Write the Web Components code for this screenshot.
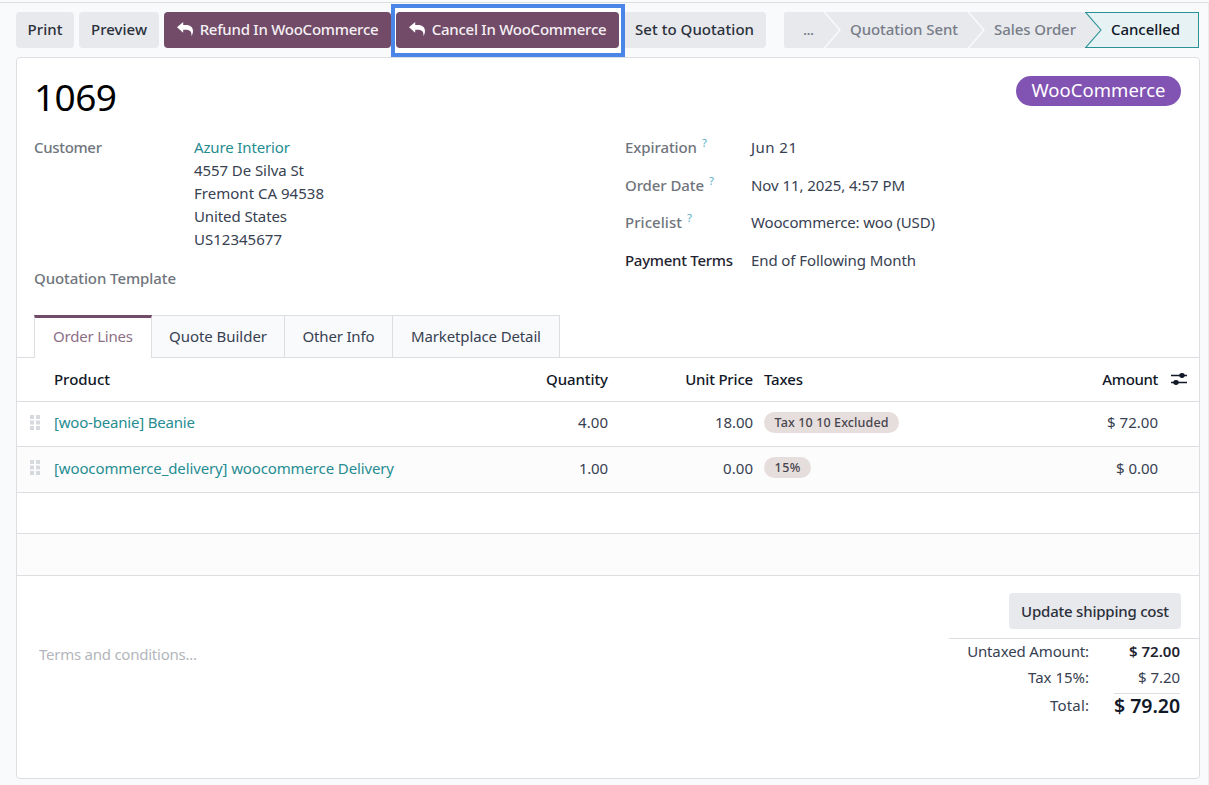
<!DOCTYPE html>
<html lang="en">
<head>
<meta charset="utf-8">
<title>1069 - Sales Order</title>
<style>
  :root {
    --brand: #714b67;
    --link: #268c91;
    --line: #dcdee2;
    --muted: #70757d;
    --text: #374151;
    --dark: #111827;
    --button: #e7e9ed;
  }

  body {
    margin: 0;
    height: 785px;
    overflow: hidden;
    background: #f9fafc;
    color: var(--text);
    font: 15px/20px "Noto Sans", "Open Sans", sans-serif;
  }
</style>
</head>
<body>
<order-form></order-form>

<script>
/**
 * FitText - a single line of text tracked to a given width in pixels
 */
class FitText extends HTMLElement {
  constructor() {
    super();
    this.attachShadow({ mode: 'open' });
    this.shadowRoot.innerHTML = `
      <style>
        :host { display: inline-block; white-space: nowrap; }
        span { display: inline-block; }
      </style>
      <span><slot></slot></span>
    `;
  }

  connectedCallback() {
    const width = Number(this.getAttribute('width'));
    const span = this.shadowRoot.querySelector('span');
    const count = this.textContent.length;
    if (!width || count < 2) return;

    const natural = span.getBoundingClientRect().width;
    span.style.letterSpacing = `${(width - natural) / (count - 1)}px`;
    this.style.width = `${width}px`;
  }
}

/**
 * ActionButton - grey by default, plum with the "primary" attribute
 */
class ActionButton extends HTMLElement {
  constructor() {
    super();
    this.attachShadow({ mode: 'open' });
    this.shadowRoot.innerHTML = `
      <style>
        :host { display: block; position: relative; flex: none; }
        button {
          position: relative;
          display: flex;
          align-items: center;
          justify-content: center;
          gap: 7px;
          box-sizing: border-box;
          width: 100%;
          height: 36px;
          padding: 0 0 var(--lift, 2px);
          border: 0;
          border-radius: 4px;
          background: var(--button);
          color: #2b303b;
          font: inherit;
          font-weight: 500;
        }
        svg { display: none; }
        :host([primary]) button { background: var(--brand); color: #f5f0f4; }
        :host([primary]) svg { display: block; }
        :host([marked])::before {
          content: '';
          position: absolute;
          inset: -8px -6px -9px -5px;
          border: 4px solid #4a86e8;
          background: #fff;
        }
      </style>
      <button>
        <svg width="16" height="14" viewBox="0 0 16 14">
          <path fill="#fff" d="M0 5.3 6.2 0v3.1h2.6c4.9 0 7.2 2.4 7.2 6.2 0 1.8-.7 3.4-1.6 4.7.4-4-1.1-6.2-5.6-6.2H6.2v3z"/>
        </svg>
        <slot></slot>
      </button>
    `;
  }
}

/**
 * StatusStep - one arrow segment of the status bar
 */
class StatusStep extends HTMLElement {
  constructor() {
    super();
    this.attachShadow({ mode: 'open' });
    this.shadowRoot.innerHTML = `
      <style>
        :host {
          display: flex;
          align-items: center;
          box-sizing: border-box;
          height: 36px;
          background: var(--button);
          color: #777c88;
          font-weight: 500;
        }
        svg { display: block; flex: none; margin-right: 9px; }
        .text { padding-bottom: 2px; }
        polygon { fill: none; }
        path { fill: none; stroke: #f9fafc; stroke-width: 1.5; }
        :host([first]) { border-radius: 2px 0 0 2px; }
        :host([first]) svg { display: none; }
        :host([active]) {
          background: #e6f2f3;
          color: var(--dark);
          box-shadow: inset -1px 0 #2a9196, inset 0 1px #2a9196, inset 0 -1px #2a9196;
        }
        :host([active]) polygon { fill: var(--button); }
        :host([active]) path { stroke: #2a9196; stroke-width: 1.1; }
      </style>
      <svg width="17" height="36" viewBox="0 0 17 36">
        <polygon points="0,0 16,18 0,36"/>
        <path d="M.3 0 16 18 .3 36"/>
      </svg>
      <div class="text"><slot></slot></div>
    `;
  }
}

/**
 * FormField - label and value side by side
 */
class FormField extends HTMLElement {
  constructor() {
    super();
    this.attachShadow({ mode: 'open' });
    this.shadowRoot.innerHTML = `
      <style>
        :host { display: flex; align-items: flex-start; }
        .label {
          flex: none;
          display: flex;
          gap: 5px;
          width: var(--label-width);
          color: var(--muted);
          font-weight: 500;
        }
        :host([strong]) .label { color: #1f2430; }
        sup {
          display: none;
          color: #6bb7cf;
          font-size: 11px;
          line-height: 12px;
        }
        :host([help]) sup { display: block; }
      </style>
      <div class="label"><slot name="label"></slot><sup>?</sup></div>
      <div><slot></slot></div>
    `;
  }
}

/**
 * TabBar - takes one div per tab, the one with aria-selected is current
 */
class TabBar extends HTMLElement {
  constructor() {
    super();
    this.attachShadow({ mode: 'open' });
    this.shadowRoot.innerHTML = `
      <style>
        :host {
          display: flex;
          height: 43px;
          padding-left: 17px;
          box-sizing: border-box;
          box-shadow: inset 0 -1px var(--line);
        }
        ::slotted(div) {
          box-sizing: border-box;
          display: flex;
          align-items: center;
          justify-content: center;
          padding-bottom: 2px;
          border: solid var(--line);
          border-width: 1px 1px 1px 0;
          background: #f9fafc;
        }
        ::slotted(div[aria-selected]) {
          border-top: 3px solid var(--brand);
          border-left: 1px solid var(--line);
          border-bottom: 0;
          padding-bottom: 4px;
          background: #fff;
          color: #8d6f86;
        }
      </style>
      <slot></slot>
    `;
  }
}

/**
 * OrderRow - one table row with slots for each column
 */
class OrderRow extends HTMLElement {
  constructor() {
    super();
    this.attachShadow({ mode: 'open' });
    this.shadowRoot.innerHTML = `
      <style>
        :host {
          display: grid;
          grid-template-columns: 37px 1fr 145px 11px 269px 125px 41px;
          align-items: center;
          box-sizing: border-box;
          border-bottom: 1px solid var(--line);
        }
        .main { display: flex; justify-content: space-between; }
        .right { text-align: right; }
        .taxes { grid-column: 5; }
        .handle { display: none; margin-left: 13px; }
        :host([draggable]) { padding-bottom: 4px; }
        :host([draggable]) .handle { display: block; }
        :host([striped]) { background: #fcfcfd; }
        :host([head]) { padding-bottom: 2px; color: var(--dark); font-weight: 500; }
        ::slotted([slot="product"]) { color: var(--product, inherit); }
      </style>
      <div>
        <svg class="handle" width="10" height="15" fill="#d6d9de">
          <path d="M0 0h4v4H0zM6 0h4v4H6zM0 5.5h4v4H0zM6 5.5h4v4H6zM0 11h4v4H0zM6 11h4v4H6z"/>
        </svg>
      </div>
      <div class="main"><slot name="product"></slot><slot name="quantity"></slot></div>
      <div class="right"><slot name="price"></slot></div>
      <div class="taxes"><slot name="taxes"></slot></div>
      <div class="right"><slot name="amount"></slot></div>
      <div><slot name="tool"></slot></div>
    `;
  }
}

/**
 * TagPill - rounded tag
 */
class TagPill extends HTMLElement {
  constructor() {
    super();
    this.attachShadow({ mode: 'open' });
    this.shadowRoot.innerHTML = `
      <style>
        :host {
          display: block;
          width: fit-content;
          height: 21px;
          padding: 0 10.5px;
          border-radius: 11px;
          background: #e6dedd;
          color: #49454d;
          font-size: 12.5px;
          font-weight: 500;
          line-height: 21px;
        }
      </style>
      <slot></slot>
    `;
  }
}

/**
 * OrderTotals - shipping button and the amounts
 */
class OrderTotals extends HTMLElement {
  constructor() {
    super();
    this.attachShadow({ mode: 'open' });
    this.shadowRoot.innerHTML = `
      <style>
        :host { display: flex; flex-direction: column; align-items: flex-end; width: 250px; }
        action-button { --lift: 0; width: 172px; margin: 17px 18px 9px 0; }
        .sums {
          display: grid;
          grid-template-columns: 140px 1fr;
          grid-template-rows: 23px 29px 30px;
          align-items: center;
          box-sizing: border-box;
          width: 250px;
          padding-right: 19px;
          border-top: 1px solid var(--line);
          text-align: right;
        }
        .sums > fit-text { justify-self: end; }
        .untaxed { color: #1f2430; font-weight: 600; }
        .total-label { padding-bottom: 3px; }
        .total {
          justify-self: end;
          width: 66px;
          padding-bottom: 2px;
          border-top: 1px solid var(--line);
          color: var(--dark);
          font-size: 19.5px;
          font-weight: 600;
          line-height: 23px;
        }
      </style>
      <action-button><fit-text width="148">Update shipping cost</fit-text></action-button>
      <div class="sums">
        <fit-text width="122">Untaxed Amount:</fit-text>
        <div class="untaxed"><fit-text width="51">$ 72.00</fit-text></div>
        <fit-text width="61">Tax 15%:</fit-text>
        <div><fit-text width="42">$ 7.20</fit-text></div>
        <fit-text class="total-label" width="39">Total:</fit-text>
        <div class="total"><fit-text width="66">$ 79.20</fit-text></div>
      </div>
    `;
  }
}

/**
 * OrderForm - the whole sales order view
 */
class OrderForm extends HTMLElement {
  constructor() {
    super();
    this.attachShadow({ mode: 'open' });
    this.shadowRoot.innerHTML = `
      <style>
        :host {
          display: block;
          box-sizing: border-box;
          height: 785px;
          margin-top: 2px;
          padding: 9px 8px 0 16px;
          border-top: 1px solid var(--line);
          border-right: 1px solid #e9ebee;
        }
        .bar { display: flex; justify-content: space-between; height: 36px; padding-right: 1px; }
        .actions { display: flex; gap: 5px; }
        .status { display: flex; }
        .sheet {
          box-sizing: border-box;
          height: 722px;
          margin-top: 9px;
          border: 1px solid var(--line);
          border-radius: 4px;
          background: #fff;
        }
        .title {
          display: flex;
          justify-content: space-between;
          align-items: flex-start;
          height: 79px;
          padding: 18px 18px 0 17px;
          box-sizing: border-box;
        }
        h1 { margin: -1px 0 0; color: #000; font-size: 37px; line-height: 44px; font-weight: 400; }
        .badge {
          display: flex;
          align-items: center;
          justify-content: center;
          box-sizing: border-box;
          width: 165px;
          height: 30px;
          padding-bottom: 2px;
          border-radius: 15px;
          background: #8153b3;
          color: #fff;
          font-size: 18.5px;
        }
        .fields { display: flex; height: 178px; padding-left: 17px; }
        .left { --label-width: 160px; width: 591px; }
        .right { --label-width: 126px; display: flex; flex-direction: column; gap: 17.5px; }
        .address { display: flex; flex-direction: column; gap: 3.1px; margin-bottom: 19px; }
        .link { color: var(--link); }
        .below { display: flex; justify-content: space-between; }
        .terms { margin: 68px 0 0 22px; color: #b3b6bc; }
        order-row { --product: var(--link); }
        order-row[head] { --product: var(--dark); }
      </style>

      <div class="bar">
        <div class="actions">
          <action-button style="width: 58px"><fit-text width="35">Print</fit-text></action-button>
          <action-button style="width: 80px"><fit-text width="56">Preview</fit-text></action-button>
          <action-button primary style="width: 227px"><fit-text width="179">Refund In WooCommerce</fit-text></action-button>
          <action-button primary marked style="width: 223px; z-index: 1"><fit-text width="175">Cancel In WooCommerce</fit-text></action-button>
          <action-button style="width: 143px; margin-left: -1px"><fit-text width="119">Set to Quotation</fit-text></action-button>
        </div>
        <div class="status">
          <status-step first style="width: 40px; padding-left: 19px"><fit-text width="11">...</fit-text></status-step>
          <status-step style="width: 144px"><fit-text width="108">Quotation Sent</fit-text></status-step>
          <status-step style="width: 117px"><fit-text width="82">Sales Order</fit-text></status-step>
          <status-step active style="width: 114px"><fit-text width="69">Cancelled</fit-text></status-step>
        </div>
      </div>

      <div class="sheet">
        <div class="title">
          <h1><fit-text width="83">1069</fit-text></h1>
          <div class="badge"><fit-text width="134">WooCommerce</fit-text></div>
        </div>

        <div class="fields">
          <div class="left">
            <form-field>
              <fit-text slot="label" width="68">Customer</fit-text>
              <div class="address">
                <fit-text class="link" width="96">Azure Interior</fit-text>
                <fit-text width="110">4557 De Silva St</fit-text>
                <fit-text width="130">Fremont CA 94538</fit-text>
                <fit-text width="93">United States</fit-text>
                <fit-text width="88">US12345677</fit-text>
              </div>
            </form-field>
            <form-field>
              <fit-text slot="label" width="142">Quotation Template</fit-text>
            </form-field>
          </div>
          <div class="right">
            <form-field help>
              <fit-text slot="label" width="72">Expiration</fit-text>
              <fit-text width="46">Jun 21</fit-text>
            </form-field>
            <form-field help>
              <fit-text slot="label" width="79">Order Date</fit-text>
              <fit-text width="154">Nov 11, 2025, 4:57 PM</fit-text>
            </form-field>
            <form-field help>
              <fit-text slot="label" width="57">Pricelist</fit-text>
              <fit-text width="184">Woocommerce: woo (USD)</fit-text>
            </form-field>
            <form-field strong>
              <fit-text slot="label" width="108">Payment Terms</fit-text>
              <fit-text width="165">End of Following Month</fit-text>
            </form-field>
          </div>
        </div>

        <tab-bar>
          <div aria-selected="true" style="width: 118px"><fit-text width="80">Order Lines</fit-text></div>
          <div style="width: 133px"><fit-text width="98">Quote Builder</fit-text></div>
          <div style="width: 108px"><fit-text width="72">Other Info</fit-text></div>
          <div style="width: 167px"><fit-text width="130">Marketplace Detail</fit-text></div>
        </tab-bar>

        <order-row head style="height: 44px">
          <fit-text slot="product" width="56">Product</fit-text>
          <fit-text slot="quantity" width="62">Quantity</fit-text>
          <fit-text slot="price" width="68">Unit Price</fit-text>
          <fit-text slot="taxes" width="39">Taxes</fit-text>
          <fit-text slot="amount" width="56">Amount</fit-text>
          <svg slot="tool" width="16" height="14" viewBox="0 0 16 14" style="display: block; margin-left: 13px">
            <path d="M0 3.5h16M0 10.5h16" stroke="#111827" stroke-width="1.4"/>
            <ellipse cx="11" cy="3.5" rx="2.7" ry="2.4" fill="#111827"/>
            <ellipse cx="5" cy="10.5" rx="2.7" ry="2.4" fill="#111827"/>
          </svg>
        </order-row>
        <order-row draggable="true" style="height: 45px">
          <fit-text slot="product" width="141">[woo-beanie] Beanie</fit-text>
          <fit-text slot="quantity" width="30">4.00</fit-text>
          <fit-text slot="price" width="38">18.00</fit-text>
          <tag-pill slot="taxes"><fit-text width="114">Tax 10 10 Excluded</fit-text></tag-pill>
          <fit-text slot="amount" width="51">$ 72.00</fit-text>
        </order-row>
        <order-row draggable="true" striped style="height: 46px">
          <fit-text slot="product" width="340">[woocommerce_delivery] woocommerce Delivery</fit-text>
          <fit-text slot="quantity" width="29">1.00</fit-text>
          <fit-text slot="price" width="30">0.00</fit-text>
          <tag-pill slot="taxes"><fit-text width="26">15%</fit-text></tag-pill>
          <fit-text slot="amount" width="42">$ 0.00</fit-text>
        </order-row>
        <order-row style="height: 41px"></order-row>
        <order-row striped style="height: 42px"></order-row>

        <div class="below">
          <div class="terms"><fit-text width="158">Terms and conditions...</fit-text></div>
          <order-totals></order-totals>
        </div>
      </div>
    `;
  }
}

// Register the custom elements, text first so it is ready inside the others
customElements.define('fit-text', FitText);
customElements.define('action-button', ActionButton);
customElements.define('status-step', StatusStep);
customElements.define('form-field', FormField);
customElements.define('tab-bar', TabBar);
customElements.define('order-row', OrderRow);
customElements.define('tag-pill', TagPill);
customElements.define('order-totals', OrderTotals);
customElements.define('order-form', OrderForm);
</script>
</body>
</html>
